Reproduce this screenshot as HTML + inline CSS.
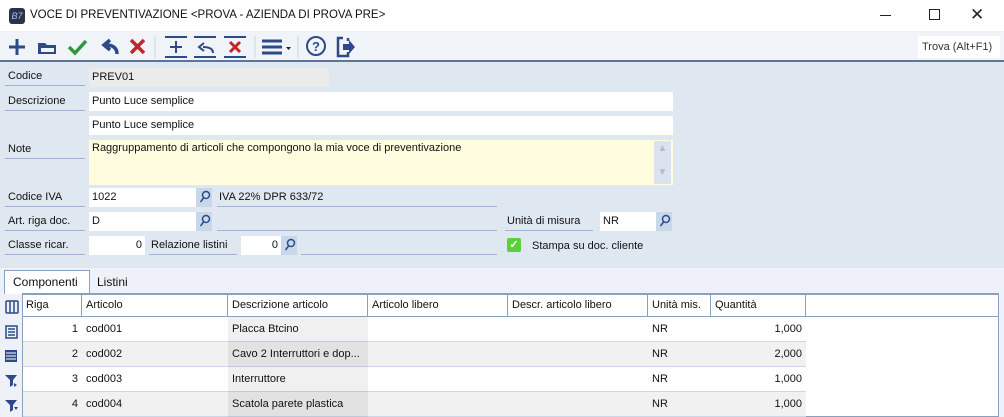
<!DOCTYPE html>
<html><head><meta charset="utf-8"><style>
*{box-sizing:border-box;margin:0;padding:0}
body{width:1004px;height:417px;overflow:hidden;background:#dfe7f1;font-family:"Liberation Sans",sans-serif;font-size:11px;color:#111;position:relative}
.a{position:absolute}
.lbl{position:absolute;border-bottom:1px solid #9fb5cf;padding-left:3px;line-height:17px;height:18px;font-size:11px}
.f{position:absolute;background:#fff;line-height:19px;padding-left:3px;height:19px;white-space:nowrap}
.btn{position:absolute;background:#c8d7ea;width:16px;height:19px}
.ln{position:absolute;border-bottom:1px solid #9fb5cf;height:19px}
.cell{position:absolute;height:25px;line-height:24px;padding:0 4px;white-space:nowrap;overflow:hidden}
</style></head><body>
<div class="a" style="left:0;top:0;width:1004px;height:31px;background:#fff"></div>
<div class="a" style="left:9px;top:8px;width:16px;height:16px;background:#2d3145;border-radius:3px;color:#9fc0ff;font-size:9px;line-height:16px;text-align:center;font-style:italic">B7</div>
<div class="a" style="left:30px;top:9px;font-size:11.5px">VOCE DI PREVENTIVAZIONE &lt;PROVA - AZIENDA DI PROVA PRE&gt;</div>
<div class="a" style="left:880px;top:15px;width:11px;height:1px;background:#222"></div>
<div class="a" style="left:929px;top:9px;width:11px;height:11px;border:1px solid #222"></div>
<div class="a" style="left:970px;top:5px;font-size:17px;color:#222">✕</div>
<div class="a" style="left:0;top:31px;width:1004px;height:31px;background:#f0f4f9;border-bottom:2px solid #5d7597"></div>
<svg class="a" style="left:0;top:31px" width="370" height="31">
<g stroke="#2b4a87" stroke-width="3" fill="none"><path d="M17 8v16M9 16h16"/></g>
<path d="M38 12h7l2 2h9v9H38z" fill="#2b4a87"/><path d="M41 17h13v4H41z" fill="#f0f4f9"/>
<path d="M69 16l6 6 11-12" stroke="#2a9a3a" stroke-width="3.5" fill="none"/>
<path d="M117 23c0-6-4-9-11-9M110 9l-6 5 6 5" stroke="#2b4a87" stroke-width="3.5" fill="none"/>
<path d="M131 9l13 13M144 9l-13 13" stroke="#c0272d" stroke-width="3.5"/>
<path d="M155 5v22M255 5v22M298 5v22" stroke="#c9d3df"/>
<g stroke="#2b4a87" stroke-width="2" fill="none"><path d="M165 6h22M165 26h22M176 10v12M170 16h12"/>
<path d="M194 6h22M194 26h22M213 22c0-4-3-6-10-6M204 12l-5 4 5 4"/></g>
<path d="M224 6h22M224 26h22" stroke="#2b4a87" stroke-width="2"/>
<path d="M230 11l10 10M240 11l-10 10" stroke="#c0272d" stroke-width="3"/>
<path d="M262 10h20M262 16h20M262 22h20" stroke="#2b4a87" stroke-width="3"/>
<path d="M286 16h5l-2.5 3z" fill="#222"/>
<circle cx="316" cy="15" r="9" stroke="#2b4a87" stroke-width="2" fill="none"/>
<text x="312" y="20" font-size="13" font-weight="bold" fill="#2b4a87" font-family="Liberation Sans">?</text>
<path d="M343 7h-5v18h10v-4M348 7v3" stroke="#2b4a87" stroke-width="2.5" fill="none"/>
<path d="M343 13h6v-4l6 7-6 7v-4h-6z" fill="#2b4a87"/>
</svg>
<div class="a" style="left:918px;top:36px;width:82px;height:22px;background:#fff;color:#333;line-height:22px;padding-left:4px">Trova (Alt+F1)</div>
<div class="lbl" style="left:5px;top:68px;width:80px">Codice</div>
<div class="f" style="left:89px;top:68px;width:240px;background:#ebebeb">PREV01</div>
<div class="lbl" style="left:5px;top:93px;width:80px">Descrizione</div>
<div class="f" style="left:89px;top:92px;width:584px">Punto Luce semplice</div>
<div class="f" style="left:89px;top:116px;width:584px">Punto Luce semplice</div>
<div class="lbl" style="left:5px;top:141px;width:80px">Note</div>
<div class="a" style="left:89px;top:140px;width:584px;height:45px;background:#fffcdf;padding:2px 3px">Raggruppamento di articoli che compongono la mia voce di preventivazione</div>
<div class="a" style="left:654px;top:141px;width:17px;height:43px;background:#dbe3ee;color:#b5bfcc;font-size:10px;text-align:center;line-height:12px;padding-top:2px">▲<br><br>▼</div>
<div class="lbl" style="left:5px;top:189px;width:80px">Codice IVA</div>
<div class="f" style="left:89px;top:188px;width:107px">1022</div>
<div class="btn" style="left:196px;top:188px"></div>
<div class="ln" style="left:217px;top:188px;width:280px;line-height:19px;padding-left:2px">IVA 22% DPR 633/72</div>
<div class="lbl" style="left:5px;top:213px;width:80px">Art. riga doc.</div>
<div class="f" style="left:89px;top:212px;width:107px">D</div>
<div class="btn" style="left:196px;top:212px"></div>
<div class="ln" style="left:217px;top:212px;width:280px"></div>
<div class="lbl" style="left:505px;top:213px;width:88px;padding-left:2px">Unità di misura</div>
<div class="f" style="left:600px;top:212px;width:56px">NR</div>
<div class="btn" style="left:656px;top:212px"></div>
<div class="lbl" style="left:5px;top:237px;width:80px">Classe ricar.</div>
<div class="f" style="left:89px;top:236px;width:56px;text-align:right;padding-right:3px">0</div>
<div class="lbl" style="left:149px;top:237px;width:88px;padding-left:2px">Relazione listini</div>
<div class="f" style="left:241px;top:236px;width:40px;text-align:right;padding-right:3px">0</div>
<div class="btn" style="left:281px;top:236px"></div>
<div class="ln" style="left:301px;top:236px;width:196px"></div>
<div class="a" style="left:507px;top:238px;width:14px;height:14px;background:#5ad13a;border-radius:2px;color:#fff;font-size:11px;line-height:14px;text-align:center;font-weight:bold">✓</div>
<div class="a" style="left:532px;top:240px">Stampa su doc. cliente</div>
<svg class="a" style="left:0;top:0" width="680" height="260">
<g stroke="#2b4a87" stroke-width="1.5" fill="none">
<circle cx="206" cy="195" r="3.5"/><path d="M203.5 198l-3 4"/>
<circle cx="206" cy="219" r="3.5"/><path d="M203.5 222l-3 4"/>
<circle cx="666" cy="219" r="3.5"/><path d="M663.5 222l-3 4"/>
<circle cx="291" cy="243" r="3.5"/><path d="M288.5 246l-3 4"/>
</g></svg>
<div class="a" style="left:0;top:268px;width:1004px;height:149px;background:#eef2f8"></div>
<div class="a" style="left:4px;top:270px;width:86px;height:24px;background:#fff;border:1px solid #8aa0bd;border-bottom:none;line-height:22px;padding-left:8px;font-size:12px">Componenti</div>
<div class="a" style="left:97px;top:275px;font-size:12px">Listini</div>
<div class="a" style="left:90px;top:293px;width:909px;height:1px;background:#8aa0bd"></div>
<div class="a" style="left:22px;top:293px;width:977px;height:124px;background:#fff;border:1px solid #8aa0bd;border-top:2px solid #8aa0bd"></div>
<div class="a" style="left:22px;top:316px;width:976px;height:1px;background:#8aa0bd"></div>
<div class="a" style="left:22px;top:295px">
<div class="cell" style="left:0;width:60px;height:21px;line-height:20px;border-right:1px solid #8aa0bd">Riga</div>
<div class="cell" style="left:60px;width:146px;height:21px;line-height:20px;border-right:1px solid #8aa0bd">Articolo</div>
<div class="cell" style="left:206px;width:140px;height:21px;line-height:20px;border-right:1px solid #8aa0bd">Descrizione articolo</div>
<div class="cell" style="left:346px;width:140px;height:21px;line-height:20px;border-right:1px solid #8aa0bd">Articolo libero</div>
<div class="cell" style="left:486px;width:140px;height:21px;line-height:20px;border-right:1px solid #8aa0bd">Descr. articolo libero</div>
<div class="cell" style="left:626px;width:63px;height:21px;line-height:20px;border-right:1px solid #8aa0bd">Unità mis.</div>
<div class="cell" style="left:689px;width:95px;height:21px;line-height:20px;border-right:1px solid #8aa0bd">Quantità</div>
</div>
<div class="a" style="left:23px;top:317px;width:783px;height:100px">
 <div class="a" style="left:0;top:0;width:783px;height:25px;background:#fff;border-bottom:1px solid #c9d7e8"></div>
 <div class="a" style="left:0;top:25px;width:783px;height:25px;background:#f1f1f1;border-bottom:1px solid #c9d7e8"></div>
 <div class="a" style="left:0;top:50px;width:783px;height:25px;background:#fff;border-bottom:1px solid #c9d7e8"></div>
 <div class="a" style="left:0;top:75px;width:783px;height:25px;background:#f1f1f1;border-bottom:1px solid #c9d7e8"></div>
 <div class="a" style="left:205px;top:0;width:140px;height:100px;background:rgba(0,0,0,0.06)"></div>
</div>
<div class="a" style="left:23px;top:317px">
 <div class="cell" style="top:0;width:59px;text-align:right">1</div><div class="cell" style="top:0;left:59px">cod001</div><div class="cell" style="top:0;left:205px">Placca Btcino</div><div class="cell" style="top:0;left:625px">NR</div><div class="cell" style="top:0;left:688px;width:95px;text-align:right">1,000</div>
 <div class="cell" style="top:25px;width:59px;text-align:right">2</div><div class="cell" style="top:25px;left:59px">cod002</div><div class="cell" style="top:25px;left:205px">Cavo 2 Interruttori e dop...</div><div class="cell" style="top:25px;left:625px">NR</div><div class="cell" style="top:25px;left:688px;width:95px;text-align:right">2,000</div>
 <div class="cell" style="top:50px;width:59px;text-align:right">3</div><div class="cell" style="top:50px;left:59px">cod003</div><div class="cell" style="top:50px;left:205px">Interruttore</div><div class="cell" style="top:50px;left:625px">NR</div><div class="cell" style="top:50px;left:688px;width:95px;text-align:right">1,000</div>
 <div class="cell" style="top:75px;width:59px;text-align:right">4</div><div class="cell" style="top:75px;left:59px">cod004</div><div class="cell" style="top:75px;left:205px">Scatola parete plastica</div><div class="cell" style="top:75px;left:625px">NR</div><div class="cell" style="top:75px;left:688px;width:95px;text-align:right">1,000</div>
</div>
<svg class="a" style="left:0;top:295px" width="22" height="122">
<g stroke="#2b4a87" fill="none" stroke-width="1.5">
<rect x="6" y="6" width="12" height="12" rx="1"/><path d="M10 6v12M14 6v12"/>
<rect x="6" y="31" width="11" height="12"/><path d="M8 34h7M8 37h7M8 40h7"/>
</g>
<rect x="5" y="55" width="12" height="12" fill="#2b4a87"/><path d="M6 58h10M6 61h10M6 64h10" stroke="#fff"/>
<path d="M5 80h12l-4 5v5l-3 2v-7z" fill="#2b4a87"/><path d="M14 88l3 2-3 2z" fill="#2b4a87"/>
<path d="M5 105h12l-4 5v5l-3 2v-7z" fill="#2b4a87"/><path d="M14 112h4l-2 3z" fill="#2b4a87"/>
</svg>
</body></html>
